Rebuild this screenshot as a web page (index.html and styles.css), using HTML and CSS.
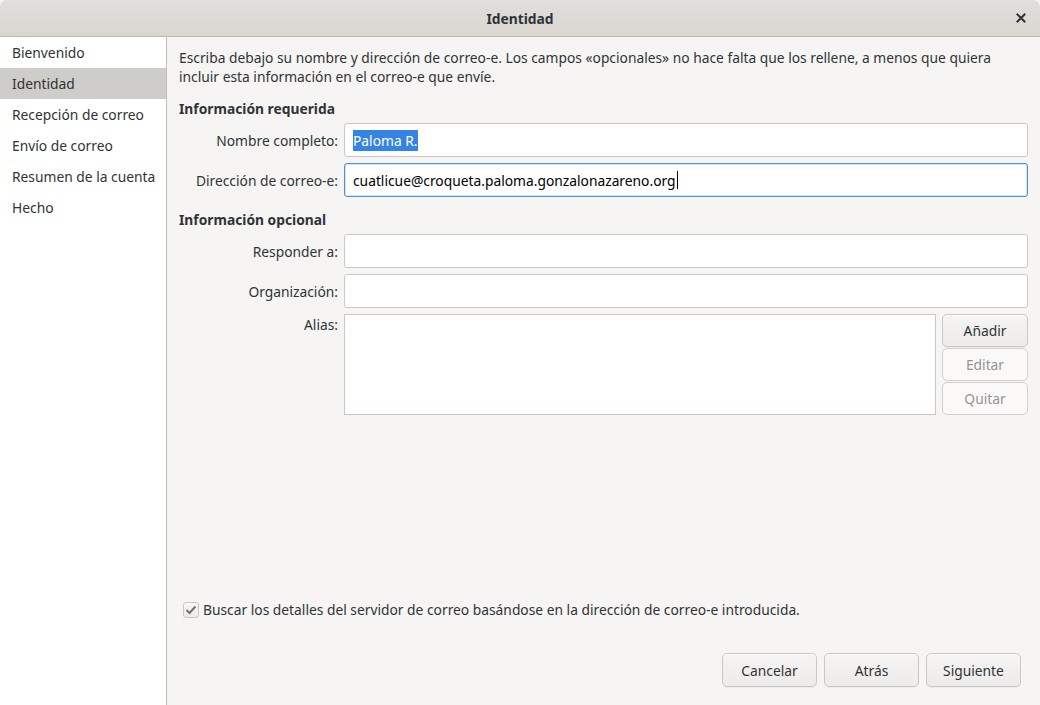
FILE: index.html
```html
<!DOCTYPE html>
<html lang="es">
<head>
<meta charset="utf-8">
<title>Identidad</title>
<link rel="stylesheet" href="styles.css">
</head>
<body>
<div class="window">
  <header class="titlebar">
    <span class="title">Identidad</span>
    <span class="close" aria-label="Cerrar">
      <svg width="10" height="10" viewBox="0 0 10 10"><path d="M1.5 1.5 L8.5 8.5 M8.5 1.5 L1.5 8.5" stroke="#2e3436" stroke-width="2" stroke-linecap="square"/></svg>
    </span>
  </header>
  <div class="body">
    <nav class="sidebar">
      <div class="nav-item">Bienvenido</div>
      <div class="nav-item selected">Identidad</div>
      <div class="nav-item">Recepción de correo</div>
      <div class="nav-item">Envío de correo</div>
      <div class="nav-item">Resumen de la cuenta</div>
      <div class="nav-item">Hecho</div>
    </nav>
    <main class="content">
      <p class="intro">Escriba debajo su nombre y dirección de correo-e. Los campos «opcionales» no hace falta que los rellene, a menos que quiera incluir esta información en el correo-e que envíe.</p>
      <h2 class="section">Información requerida</h2>
      <div class="form">
        <label class="label">Nombre completo:</label>
        <div class="entry"><span class="sel">Paloma R.</span></div>
        <label class="label">Dirección de correo-e:</label>
        <div class="entry focused">cuatlicue@croqueta.paloma.gonzalonazareno.org<span class="caret"></span></div>
      </div>
      <h2 class="section">Información opcional</h2>
      <div class="form">
        <label class="label">Responder a:</label>
        <div class="entry"></div>
        <label class="label">Organización:</label>
        <div class="entry"></div>
        <label class="label top">Alias:</label>
        <div class="alias">
          <div class="alias-list"></div>
          <div class="alias-buttons">
            <button class="btn">Añadir</button>
            <button class="btn" disabled>Editar</button>
            <button class="btn" disabled>Quitar</button>
          </div>
        </div>
      </div>
      <div class="spacer"></div>
      <label class="check">
        <span class="box"><svg width="12" height="10" viewBox="0 0 12 10"><path d="M1.5 5 L4.5 8 L10.5 1.5" fill="none" stroke="#6e7373" stroke-width="2"/></svg></span>
        Buscar los detalles del servidor de correo basándose en la dirección de correo-e introducida.
      </label>
      <div class="actions">
        <button class="btn wide">Cancelar</button>
        <button class="btn wide">Atrás</button>
        <button class="btn wide">Siguiente</button>
      </div>
    </main>
  </div>
</div>
</body>
</html>
```
FILE: styles.css
```css
* { box-sizing: border-box; }
html, body { margin: 0; padding: 0; }
body {
  font-family: "Noto Sans", "DejaVu Sans", sans-serif;
  font-size: 13.8px;
  color: #2e3436;
  background: #f6f5f4;
}
.window {
  width: 1040px;
  height: 705px;
  display: flex;
  flex-direction: column;
  overflow: hidden;
}
.titlebar {
  height: 37px;
  flex: none;
  display: flex;
  align-items: center;
  justify-content: center;
  position: relative;
  background: linear-gradient(#e1dedb, #dad6d2);
  border-bottom: 1px solid #bfb8b1;
  border-radius: 7px 7px 0 0;
}
.title { font-weight: bold; font-size: 13.8px; color: #2e3436; }
.close {
  position: absolute;
  right: 14px;
  top: 13px;
  width: 10px;
  height: 10px;
  display: flex;
}
.body { flex: 1; display: flex; min-height: 0; }
.sidebar {
  width: 167px;
  flex: none;
  background: #ffffff;
  border-right: 1px solid #c0bdb9;
  padding-top: 0;
}
.nav-item {
  height: 31px;
  line-height: 31px;
  padding-left: 12px;
  white-space: nowrap;
}
.nav-item.selected { background: #cfcdca; }
.content {
  flex: 1;
  display: flex;
  flex-direction: column;
  padding: 11px 12px 18px 12px;
}
.intro { margin: 0; line-height: 19px; }
.section {
  margin: 13px 0 5px 0;
  font-size: 13.8px;
  font-weight: bold;
  line-height: 19px;
}
.form {
  display: grid;
  grid-template-columns: 159px 1fr;
  column-gap: 6px;
  row-gap: 6px;
  align-items: center;
}
.label { text-align: right; white-space: nowrap; }
.label.top { align-self: start; padding-top: 1px; }
.entry {
  height: 34px;
  background: #fff;
  border: 1px solid #cdc7c2;
  border-radius: 3px;
  padding: 0 8px;
  display: flex;
  align-items: center;
  white-space: nowrap;
  color: #000;
}
.entry.focused { border-color: #4e90e2; box-shadow: inset 0 0 0 1px rgba(78,144,226,0.25); }
.sel { background: #3584e4; color: #fff; padding: 1px 0; }
.caret {
  display: inline-block;
  width: 1px;
  height: 18px;
  background: #000;
  margin-left: 1px;
}
.alias { display: flex; gap: 6px; height: 101px; }
.alias-list {
  flex: 1;
  background: #fff;
  border: 1px solid #cdc7c2;
}
.alias-buttons { width: 86px; display: flex; flex-direction: column; gap: 1px; }
.btn {
  font-family: inherit;
  font-size: 13.8px;
  color: #2e3436;
  height: 33px;
  border: 1px solid #cdc7c2;
  border-radius: 5px;
  background: linear-gradient(#f6f5f4, #edebe9);
  box-shadow: inset 0 1px rgba(255,255,255,0.8), 0 1px rgba(0,0,0,0.04);
  padding: 0 12px;
}
.btn:disabled {
  color: #929595;
  background: #faf9f8;
  border-color: #d5d0cc;
  box-shadow: none;
}
.spacer { flex: 1; }
.check {
  display: flex;
  align-items: center;
  gap: 4px;
  padding-left: 4px;
  margin-bottom: 34px;
}
.box {
  width: 16px;
  height: 16px;
  border: 1px solid #cdc7c2;
  border-radius: 3px;
  background: linear-gradient(#f8f7f6, #edebe9);
  display: flex;
  align-items: center;
  justify-content: center;
}
.actions {
  display: flex;
  justify-content: flex-end;
  gap: 7px;
  padding-right: 7px;
}
.btn.wide { width: 95px; height: 34px; }
```
